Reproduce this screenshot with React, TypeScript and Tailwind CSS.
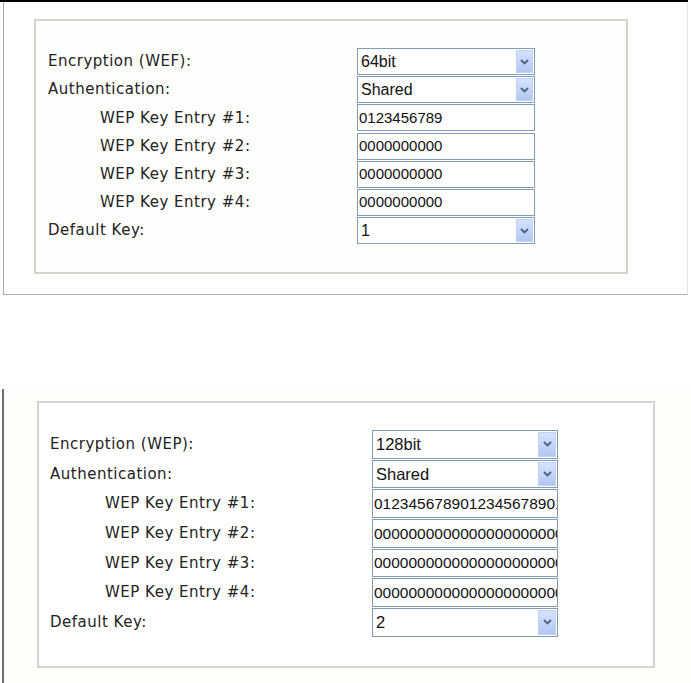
import React from 'react';

type Row = {
    label: string;
    indent?: boolean;
    kind: 'select' | 'input';
    value: string;
};

interface SectionStyle {
    grid: string;
    label: string;
    indent: string;
    control: string;
    selectText: string;
    arrow: string;
}

const topRows: Row[] = [
    { label: 'Encryption (WEF):', kind: 'select', value: '64bit' },
    { label: 'Authentication:', kind: 'select', value: 'Shared' },
    { label: 'WEP Key Entry #1:', indent: true, kind: 'input', value: '0123456789' },
    { label: 'WEP Key Entry #2:', indent: true, kind: 'input', value: '0000000000' },
    { label: 'WEP Key Entry #3:', indent: true, kind: 'input', value: '0000000000' },
    { label: 'WEP Key Entry #4:', indent: true, kind: 'input', value: '0000000000' },
    { label: 'Default Key:', kind: 'select', value: '1' },
];

const bottomRows: Row[] = [
    { label: 'Encryption (WEP):', kind: 'select', value: '128bit' },
    { label: 'Authentication:', kind: 'select', value: 'Shared' },
    { label: 'WEP Key Entry #1:', indent: true, kind: 'input', value: '01234567890123456789012345' },
    { label: 'WEP Key Entry #2:', indent: true, kind: 'input', value: '00000000000000000000000000' },
    { label: 'WEP Key Entry #3:', indent: true, kind: 'input', value: '00000000000000000000000000' },
    { label: 'WEP Key Entry #4:', indent: true, kind: 'input', value: '00000000000000000000000000' },
    { label: 'Default Key:', kind: 'select', value: '2' },
];

const topStyle: SectionStyle = {
    grid: 'grid grid-cols-[309px_178px] auto-rows-[28.2px] pl-[12px] pt-[27px]',
    label: 'text-[14px] tracking-[0.5px]',
    indent: 'pl-[52px]',
    control: 'h-[27px] text-[15px]',
    selectText: 'text-[16px]',
    arrow: 'w-[17px]',
};

const bottomStyle: SectionStyle = {
    grid: 'grid grid-cols-[322px_186px] auto-rows-[29.7px] pl-[11px] pt-[27px]',
    label: 'text-[15px] tracking-[0.5px]',
    indent: 'pl-[55px]',
    control: 'h-[28.5px] text-[15.5px]',
    selectText: 'text-[16.5px]',
    arrow: 'w-[18px]',
};

const Chevron = () => (
    <svg width="9" height="6" viewBox="0 0 9 6">
        <path d="M1 1 L4.5 4.5 L8 1" fill="none" stroke="#4d6185" strokeWidth="1.8" />
    </svg>
);

const Control = ({ row, s }: { row: Row; s: SectionStyle }) => {
    if (row.kind === 'select') {
        return (
            <div className={`${s.control} border border-[#7f9db9] bg-white flex items-stretch font-['Liberation_Sans',Arial,sans-serif] text-[#111]`}>
                <div className={`flex-1 flex items-center pl-[3px] overflow-hidden whitespace-nowrap ${s.selectText}`}>{row.value}</div>
                <div className={`${s.arrow} m-[1px] bg-gradient-to-b from-[#d6e2fd] to-[#b3c7f3] border border-[#c1d2fa] flex items-center justify-center`}>
                    <Chevron />
                </div>
            </div>
        );
    }
    return (
        <div className={`${s.control} border border-[#7f9db9] bg-white flex items-center pl-[1px] overflow-hidden whitespace-nowrap font-['Liberation_Sans',Arial,sans-serif] text-[#111]`}>
            {row.value}
        </div>
    );
};

const Form = ({ rows, s }: { rows: Row[]; s: SectionStyle }) => (
    <div className={s.grid}>
        {rows.map((row) => (
            <React.Fragment key={row.label}>
                <div className={`flex items-start ${row.indent ? s.indent : ''}`}>
                    <div className={`${s.control} flex items-center ${s.label} font-['DejaVu_Sans',Verdana,sans-serif] text-[#222]`}>
                        {row.label}
                    </div>
                </div>
                <div>
                    <Control row={row} s={s} />
                </div>
            </React.Fragment>
        ))}
    </div>
);

export default function App() {
    return (
        <div className="w-[691px] h-[683px] bg-white overflow-hidden">
            {/* Top panel */}
            <div className="h-[2px] w-[688px] bg-black" />
            <div className="ml-[3px] w-[685px] h-[293px] border-l border-b border-r border-l-[#a8a8a8] border-b-[#b0b0b0] border-r-[#e4e4e4] pt-[17px] pl-[30px]">
                <div className="w-[594px] h-[255px] border-2 border-[#d4d4cc] bg-[#fefefc]">
                    <Form rows={topRows} s={topStyle} />
                </div>
            </div>

            {/* Bottom panel */}
            <div className="mt-[94px] ml-[2px] h-[300px] border-l-2 border-l-[#707070] pt-[12px] pl-[33px] bg-[#fefefb]">
                <div className="w-[618px] h-[267px] border-2 border-[#d4d4cc] bg-white">
                    <Form rows={bottomRows} s={bottomStyle} />
                </div>
            </div>
        </div>
    );
}
